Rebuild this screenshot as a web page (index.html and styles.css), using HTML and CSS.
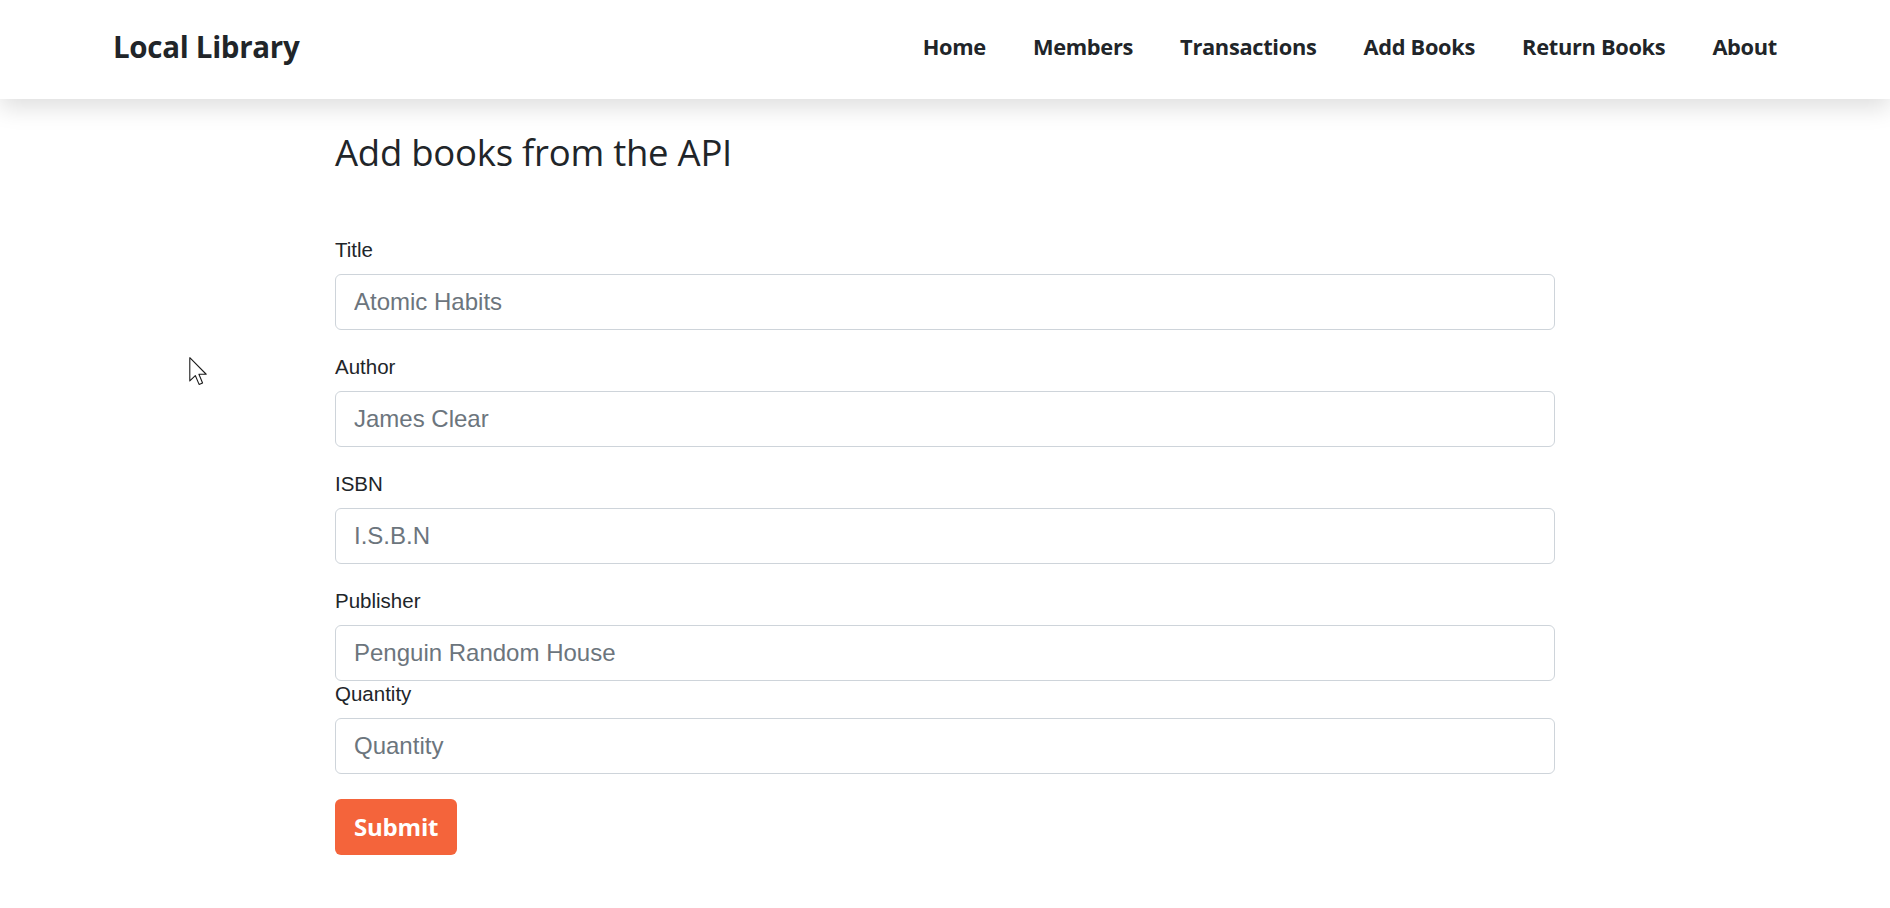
FILE: index.html
```html
<!DOCTYPE html>
<html lang="en">
<head>
<meta charset="utf-8">
<title>Local Library - Add Books</title>
<link rel="stylesheet" href="styles.css">
</head>
<body>
<header class="navbar">
  <a class="brand" href="#">Local Library</a>
  <nav class="nav-links">
    <a href="#">Home</a>
    <a href="#">Members</a>
    <a href="#">Transactions</a>
    <a href="#">Add Books</a>
    <a href="#">Return Books</a>
    <a href="#">About</a>
  </nav>
</header>
<main class="page">
  <h1 class="page-title">Add books from the API</h1>
  <form class="book-form">
    <div class="field">
      <label class="field-label" for="title">Title</label>
      <input class="field-input" id="title" type="text" placeholder="Atomic Habits">
    </div>
    <div class="field">
      <label class="field-label" for="author">Author</label>
      <input class="field-input" id="author" type="text" placeholder="James Clear">
    </div>
    <div class="field">
      <label class="field-label" for="isbn">ISBN</label>
      <input class="field-input" id="isbn" type="text" placeholder="I.S.B.N">
    </div>
    <div class="field field-tight">
      <label class="field-label" for="publisher">Publisher</label>
      <input class="field-input" id="publisher" type="text" placeholder="Penguin Random House">
    </div>
    <div class="field field-last">
      <label class="field-label" for="quantity">Quantity</label>
      <input class="field-input" id="quantity" type="text" placeholder="Quantity">
    </div>
    <button class="submit-btn" type="button">Submit</button>
  </form>
</main>
<svg class="cursor" width="19" height="29" viewBox="0 0 13 20" aria-hidden="true">
  <path d="M0.5 0.5 L0.5 16.5 L4.3 12.8 L6.9 18.9 L9.3 17.9 L6.8 11.9 L11.8 11.9 Z" fill="#ffffff" stroke="#1a1a1a" stroke-width="0.75" stroke-linejoin="round"/>
</svg>
</body>
</html>
```

FILE: styles.css
```css
* { box-sizing: border-box; }

html, body {
  margin: 0;
  padding: 0;
  background: #ffffff;
  color: #212529;
}

body {
  font-family: "Liberation Sans", Arial, sans-serif;
  min-height: 908px;
  position: relative;
}

.navbar {
  height: 99px;
  padding: 0 113px 5px 113px;
  display: flex;
  align-items: center;
  justify-content: space-between;
  background: #ffffff;
  box-shadow: 0 9px 22px rgba(0, 0, 0, 0.13);
  position: relative;
  z-index: 2;
}

.brand {
  font-family: "Open Sans", sans-serif;
  font-weight: 700;
  font-size: 29.5px;
  line-height: 1.2;
  color: #212529;
  text-decoration: none;
  letter-spacing: -0.3px;
}

.nav-links {
  display: flex;
  gap: 47px;
  align-items: center;
}

.nav-links a {
  font-family: "Open Sans", sans-serif;
  font-weight: 700;
  font-size: 21.8px;
  line-height: 1.2;
  color: #212529;
  text-decoration: none;
  letter-spacing: -0.3px;
}

.page {
  width: 1220px;
  margin: 0 auto;
  padding-top: 32px;
}

.page-title {
  font-family: "Open Sans", sans-serif;
  font-weight: 400;
  font-size: 36.5px;
  line-height: 1.2;
  margin: 0 0 61px 0;
  color: #212529;
  letter-spacing: -0.25px;
}

.book-form {
  display: flex;
  flex-direction: column;
  align-items: flex-start;
}

.field {
  width: 100%;
  margin-bottom: 23px;
}

.field-tight { margin-bottom: -1px; }

.field-last { margin-bottom: 25px; }

.field-label {
  display: block;
  font-size: 20.5px;
  line-height: 27px;
  padding-bottom: 3px;
  margin-bottom: 8px;
  color: #212529;
}

.field-input {
  display: block;
  width: 100%;
  height: 56px;
  padding: 0 18px;
  font-family: "Liberation Sans", Arial, sans-serif;
  font-size: 24px;
  color: #212529;
  background: #ffffff;
  border: 1px solid #ced4da;
  border-radius: 6px;
  outline: none;
}

.field-input::placeholder {
  color: #6c757d;
  opacity: 1;
}

.submit-btn {
  height: 56px;
  padding: 0 19px;
  font-family: "Open Sans", sans-serif;
  font-weight: 700;
  font-size: 24px;
  color: #ffffff;
  background: #f4643b;
  border: none;
  border-radius: 6px;
  cursor: pointer;
  letter-spacing: -0.2px;
}

.cursor {
  position: absolute;
  left: 189px;
  top: 357px;
  z-index: 5;
}
```
